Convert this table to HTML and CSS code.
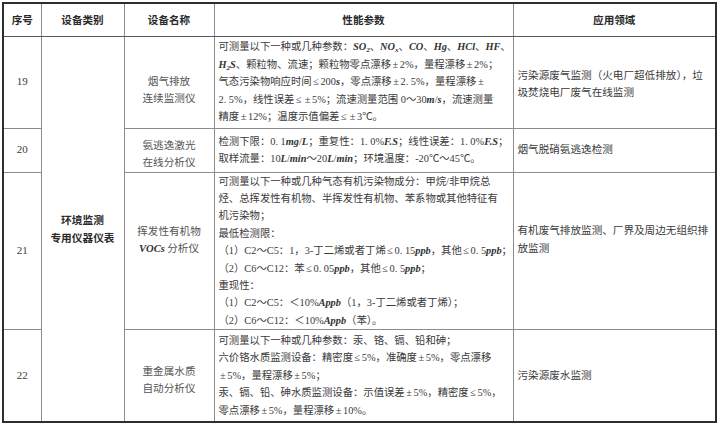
FILE: index.html
```html
<!DOCTYPE html>
<html lang="zh-CN">
<head>
<meta charset="utf-8">
<title>环境监测专用仪器仪表</title>
<link rel="stylesheet" href="styles.css">
</head>
<body>
<table class="spec">
  <colgroup>
    <col class="c-no">
    <col class="c-cat">
    <col class="c-name">
    <col class="c-param">
    <col class="c-app">
  </colgroup>
  <thead>
    <tr class="r-head">
      <th>序号</th>
      <th>设备类别</th>
      <th>设备名称</th>
      <th>性能参数</th>
      <th>应用领域</th>
    </tr>
  </thead>
  <tbody>
    <tr class="r19">
      <td class="no">19</td>
      <td class="cat" rowspan="4">环境监测<br>专用仪器仪表</td>
      <td class="name">烟气排放<br>连续监测仪</td>
      <td class="param">可测量以下一种或几种参数：<i class="f">SO<sub>2</sub></i>、<i class="f">NO<sub>x</sub></i>、<i class="f">CO</i>、<i class="f">Hg</i>、<i class="f">HCl</i>、<i class="f">HF</i>、<br><i class="f">H<sub>2</sub>S</i>、颗粒物、流速；颗粒物零点漂移<span class="w">±</span>2%，量程漂移<span class="w">±</span>2%；<br>气态污染物响应时间<span class="w">≤</span>200<i class="f">s</i>，零点漂移<span class="w">±</span>2. 5%，量程漂移<span class="w">±</span><br>2. 5%，线性误差<span class="w">≤</span><span class="w">±</span>5%；流速测量范围 0～30<i class="f">m</i>/<i class="f">s</i>，流速测量<br>精度<span class="w">±</span>12%；温度示值偏差<span class="w">≤</span><span class="w">±</span>3℃。</td>
      <td class="app">污染源废气监测（火电厂超低排放），垃<br>圾焚烧电厂废气在线监测</td>
    </tr>
    <tr class="r20">
      <td class="no">20</td>
      <td class="name">氨逃逸激光<br>在线分析仪</td>
      <td class="param">检测下限：0. 1<i class="f">mg</i>/<i class="f">L</i>；重复性：1. 0%<i class="f">F.S</i>；线性误差：1. 0%<i class="f">F.S</i>；<br>取样流量：10<i class="f">L</i>/<i class="f">min</i>～20<i class="f">L</i>/<i class="f">min</i>；环境温度：-20℃～45℃。</td>
      <td class="app">烟气脱硝氨逃逸检测</td>
    </tr>
    <tr class="r21">
      <td class="no">21</td>
      <td class="name">挥发性有机物<br><i class="f">VOCs</i> 分析仪</td>
      <td class="param">可测量以下一种或几种气态有机污染物成分：甲烷/非甲烷总<br>烃、总挥发性有机物、半挥发性有机物、苯系物或其他特征有<br>机污染物；<br>最低检测限：<br>（1）C2～C5：1，3-丁二烯或者丁烯<span class="w">≤</span>0. 15<i class="f">ppb</i>，其他<span class="w">≤</span>0. 5<i class="f">ppb</i>；<br>（2）C6～C12：苯<span class="w">≤</span>0. 05<i class="f">ppb</i>，其他<span class="w">≤</span>0. 5<i class="f">ppb</i>；<br>重现性：<br>（1）C2～C5：＜10%<i class="f">Appb</i>（1，3-丁二烯或者丁烯）；<br>（2）C6～C12：＜10%<i class="f">Appb</i>（苯）。</td>
      <td class="app">有机废气排放监测、厂界及周边无组织排<br>放监测</td>
    </tr>
    <tr class="r22">
      <td class="no">22</td>
      <td class="name">重金属水质<br>自动分析仪</td>
      <td class="param">可测量以下一种或几种参数：汞、铬、镉、铅和砷；<br>六价铬水质监测设备：精密度<span class="w">≤</span>5%，准确度<span class="w">±</span>5%，零点漂移<br><span class="w">±</span>5%，量程漂移<span class="w">±</span>5%；<br>汞、镉、铅、砷水质监测设备：示值误差<span class="w">±</span>5%，精密度<span class="w">≤</span>5%，<br>零点漂移<span class="w">±</span>5%，量程漂移<span class="w">±</span>10%。</td>
      <td class="app">污染源废水监测</td>
    </tr>
  </tbody>
</table>
</body>
</html>
```

FILE: styles.css
```css
html, body {
  margin: 0;
  padding: 0;
  background: #ffffff;
}

body {
  padding: 2px 0 0 2px;
  font-family: "Liberation Serif", "Noto Sans CJK SC", serif;
  color: #3a3a3a;
}

.spec {
  border-collapse: collapse;
  table-layout: fixed;
  width: 715px;
  border: 2px solid #2e2e2e;
  font-size: 10.6px;
  line-height: 17.4px;
}

.c-no { width: 38px; }
.c-cat { width: 83px; }
.c-name { width: 90px; }
.c-param { width: 299px; }
.c-app { width: 203px; }

.spec th,
.spec td {
  border: 1px solid #8c8c8c;
  padding: 0 4px;
  vertical-align: middle;
  overflow: hidden;
  white-space: nowrap;
}

.spec th {
  font-family: "Noto Sans CJK SC", sans-serif;
  font-weight: 700;
  font-size: 10.6px;
  color: #2a2a2a;
  text-align: center;
  border-bottom-color: #555555;
}

.r-head { height: 33px; }
.r19 { height: 92px; }
.r20 { height: 44px; }
.r21 { height: 155px; }
.r22 { height: 92px; }

.no {
  text-align: center;
  font-size: 11px;
}

.cat {
  text-align: center;
  font-family: "Noto Sans CJK SC", sans-serif;
  font-weight: 700;
  font-size: 10.7px;
  color: #2a2a2a;
}

.name {
  text-align: center;
  font-family: "Noto Sans CJK SC", sans-serif;
  color: #555555;
}

.r19 .name { padding-top: 14px; }
.r20 .name { padding-top: 6px; }
.r21 .name { padding-bottom: 22px; }
.r22 .name { padding-top: 8px; }

.spec .param {
  text-align: left;
  font-size: 10.35px;
  padding: 0 0 0 4px;
}

.app {
  text-align: left;
}

.r19 .app { padding-top: 4px; }
.r21 .app { padding-bottom: 22px; }

.w {
  display: inline-block;
  width: 0.85em;
  text-align: center;
}

.f {
  font-family: "Liberation Serif", serif;
  font-weight: 700;
  font-style: italic;
  color: #333333;
}

.f sub {
  font-size: 7px;
  line-height: 0;
  vertical-align: -2px;
}
```
